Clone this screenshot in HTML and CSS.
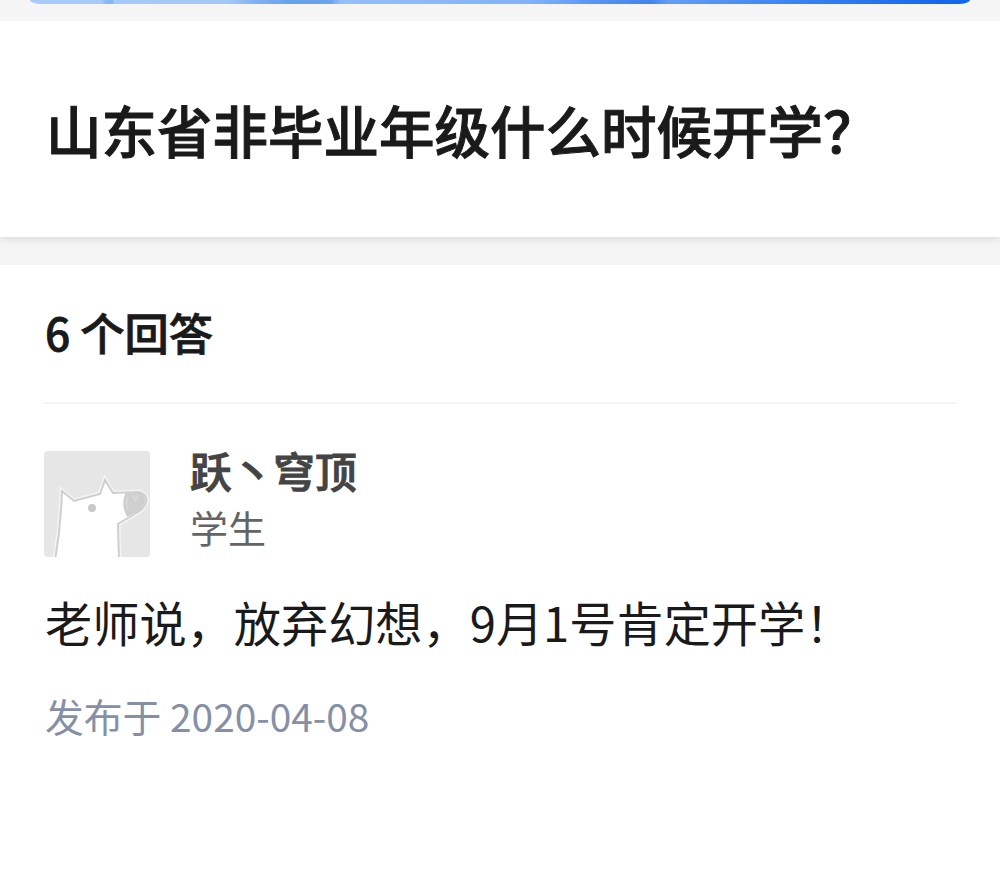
FILE: index.html
```
<!DOCTYPE html>
<html lang="zh-CN">
<head>
    <meta charset="UTF-8">
    <title>山东省非毕业年级什么时候开学？</title>
    <link rel="stylesheet" href="styles.css">
</head>
<body>
    <div class="banner">
        <div class="banner_img"></div>
    </div>
    <header class="question">
        <h1>山东省非毕业年级什么时候开学？</h1>
    </header>
    <main class="answers">
        <h2 class="a_count">6 个回答</h2>
        <div class="author">
            <svg class="avatar" viewBox="0 0 106 106">
                <rect width="106" height="106" rx="4" fill="#e6e6e6"/>
                <path d="M11 109 Q17 75 18 40 L30 50 L56 43 L61 29 L69 42 L95 41 Q109 46 97 59 L74 73 L75 109Z" fill="#fff" stroke="#f4f4f4" stroke-width="5"/>
                <path d="M11 109 Q17 75 18 40 L30 50 L56 43 L61 29 L69 42 L95 41 Q109 46 97 59 L74 73 L75 109Z" fill="#fff" stroke="#cfcfcf" stroke-width="2"/>
                <path d="M82 41 L96 41 Q107 47 96 59 L83 66 Q76 53 82 41Z" fill="#cfcfcf"/>
                <path d="M84 46 Q81 53 84 58 M88 44 Q92 47 90 50 M94 44 L92 50" fill="none" stroke="#dadada" stroke-width="1.5"/>
                <circle cx="48" cy="57" r="4" fill="#c9c9c9"/>
            </svg>
            <div class="author_info">
                <div class="name">跃丶穹顶</div>
                <div class="job">学生</div>
            </div>
        </div>
        <p class="content">老师说，放弃幻想，9月1号肯定开学！</p>
        <div class="date">发布于 2020-04-08</div>
    </main>
</body>
</html>
```
FILE: styles.css
```
body {
    margin: 0;
    background-color: #fff;
    color: #1a1a1a;
    font-family: "Noto Sans CJK SC", sans-serif;
}
h1, h2, p {margin: 0;}
/* 顶部横幅 */
.banner {
    height: 21px;
    padding: 0 30px;
    box-sizing: border-box;
    background-color: #f5f5f5;
}
.banner_img {
    height: 4px;
    border-radius: 0 0 12px 12px / 0 0 4px 4px;
    background:
        linear-gradient(90deg, transparent 71px, #86b8f2 76px, #86b8f2 83px, transparent 84px),
        linear-gradient(90deg, #a6cbfb 0%, #a2c8fa 21%, #80b1f5 24%, #63a0ee 28%, #69a4f2 32%, #94bffc 33%, #80b3fb 53%, #70a7fa 56%, #5893f6 60%, #4285ec 66%, #649df7 68%, #3c86f5 80%, #1268ee 97%);
}
/* 问题 */
.question {
    position: relative;
    height: 216px;
    padding: 67px 46px 0;
    box-sizing: border-box;
    box-shadow: 0 2px 8px rgba(26, 26, 26, 0.12);
    clip-path: inset(0 0 -12px 0);
}
.question h1 {
    font-size: 55.5px;
    line-height: 82px;
    font-weight: 500;
    -webkit-text-stroke: 1px #1a1a1a;
    white-space: nowrap;
}
/* 回答 */
.answers {
    border-top: 28px solid #f5f5f5;
    padding: 0 44px;
}
.a_count {
    height: 139px;
    padding-left: 1px;
    box-sizing: border-box;
    border-bottom: 2px solid #f4f4f4;
    font-size: 44.3px;
    line-height: 135px;
    font-weight: 500;
    -webkit-text-stroke: 0.8px #1a1a1a;
}
.author {
    display: flex;
    gap: 40px;
    padding-top: 47px;
}
.avatar {
    width: 106px;
    height: 106px;
}
.name {
    margin-top: -2px;
    font-size: 41.7px;
    line-height: 42px;
    font-weight: 500;
    color: #444;
    -webkit-text-stroke: 1px #444;
}
.job {
    margin-top: 15px;
    font-size: 38px;
    line-height: 42px;
    color: #646464;
}
.content {
    margin-top: 30px;
    padding-left: 1px;
    font-size: 47.2px;
    line-height: 70px;
}
.date {
    margin-top: 30px;
    padding-left: 1px;
    font-size: 38.8px;
    line-height: 56px;
    color: #8590a6;
}
```
